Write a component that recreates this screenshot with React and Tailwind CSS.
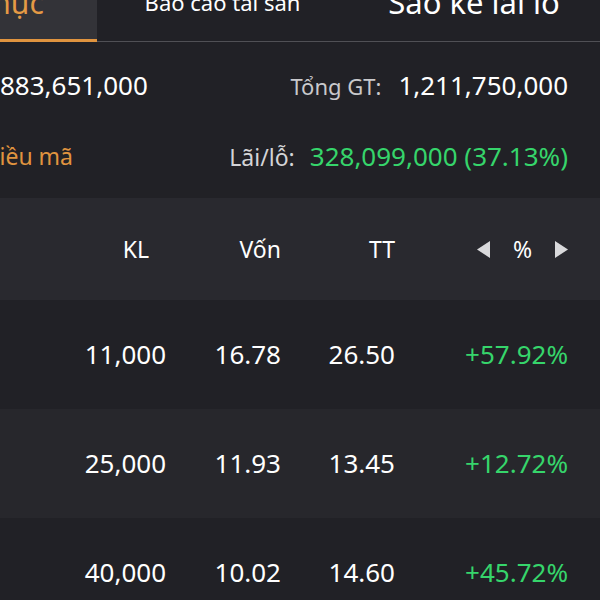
const rows = [
  { kl: "11,000", von: "16.78", tt: "26.50", pct: "+57.92%" },
  { kl: "25,000", von: "11.93", tt: "13.45", pct: "+12.72%" },
  { kl: "40,000", von: "10.02", tt: "14.60", pct: "+45.72%" },
];

function Tri({ dir }) {
  return (
    <svg width="13" height="17" viewBox="0 0 13 17" className="text-[#d9d9dc]">
      {dir === "left" ? (
        <path d="M13 0 L13 17 L0 8.5 Z" fill="currentColor" />
      ) : (
        <path d="M0 0 L0 17 L13 8.5 Z" fill="currentColor" />
      )}
    </svg>
  );
}

export default function App() {
  return (
    <div
      className="w-[600px] h-[600px] overflow-hidden bg-[#212126] text-white"
      style={{ fontFamily: '"Noto Sans", "Open Sans", sans-serif' }}
    >
      {/* tabs */}
      <div className="relative h-[42px] border-b border-[#505055]">
        <div className="flex h-[42px] w-[754px] -ml-[154px]">
          <div className="w-[251px] h-[42px] bg-[#333338] border-b-[3px] border-[#e0943f] flex justify-center">
            <span className="text-[30px] leading-[30px] -mt-[12px] text-[#e59a45] whitespace-nowrap">
              Danh mục
            </span>
          </div>
          <div className="w-[251px] flex justify-center">
            <span className="text-[22px] leading-[22px] -mt-[9px] whitespace-nowrap">
              Báo cáo tài sản
            </span>
          </div>
          <div className="w-[252px] flex justify-center">
            <span className="text-[31px] leading-[31px] -mt-[13px] whitespace-nowrap">
              Sao kê lãi lỗ
            </span>
          </div>
        </div>
      </div>

      {/* summary */}
      <div className="pt-[7px] h-[156px]">
        <div className="flex items-center h-[72px] pr-[32px]">
          <div className="w-[145px] text-right text-[26px] whitespace-nowrap">
            883,651,000
          </div>
          <div className="ml-auto flex items-baseline gap-[17px] whitespace-nowrap">
            <span className="text-[22px] text-[#c9c9cc]">Tổng GT:</span>
            <span className="text-[26px]">1,211,750,000</span>
          </div>
        </div>
        <div className="flex items-center h-[70px] pr-[32px]">
          <div className="w-[73px] flex justify-end text-[23px] text-[#e0943f] whitespace-nowrap">
            Nhiều mã
          </div>
          <div className="ml-auto flex items-baseline gap-[15px] whitespace-nowrap">
            <span className="text-[23px] text-[#d4d4d7]">Lãi/lỗ:</span>
            <span className="text-[26px] text-[#36d56b]">328,099,000 (37.13%)</span>
          </div>
        </div>
      </div>

      {/* table header */}
      <div className="h-[102px] bg-[#29292f] grid grid-cols-[166px_115px_114px_173px] items-center text-[23px]">
        <div className="text-right pr-[17px]">KL</div>
        <div className="text-right">Vốn</div>
        <div className="text-right">TT</div>
        <div className="flex items-center justify-end gap-[23px]">
          <Tri dir="left" />
          <span>%</span>
          <Tri dir="right" />
        </div>
      </div>

      {rows.map((r, i) => (
        <div
          key={i}
          className={`h-[109px] grid grid-cols-[166px_115px_114px_173px] items-center text-[26px] ${
            i % 2 === 1 ? "bg-[#27272c]" : "bg-[#212126]"
          }`}
        >
          <div className="text-right">{r.kl}</div>
          <div className="text-right">{r.von}</div>
          <div className="text-right">{r.tt}</div>
          <div className="text-right text-[#36d56b]">{r.pct}</div>
        </div>
      ))}
    </div>
  );
}
